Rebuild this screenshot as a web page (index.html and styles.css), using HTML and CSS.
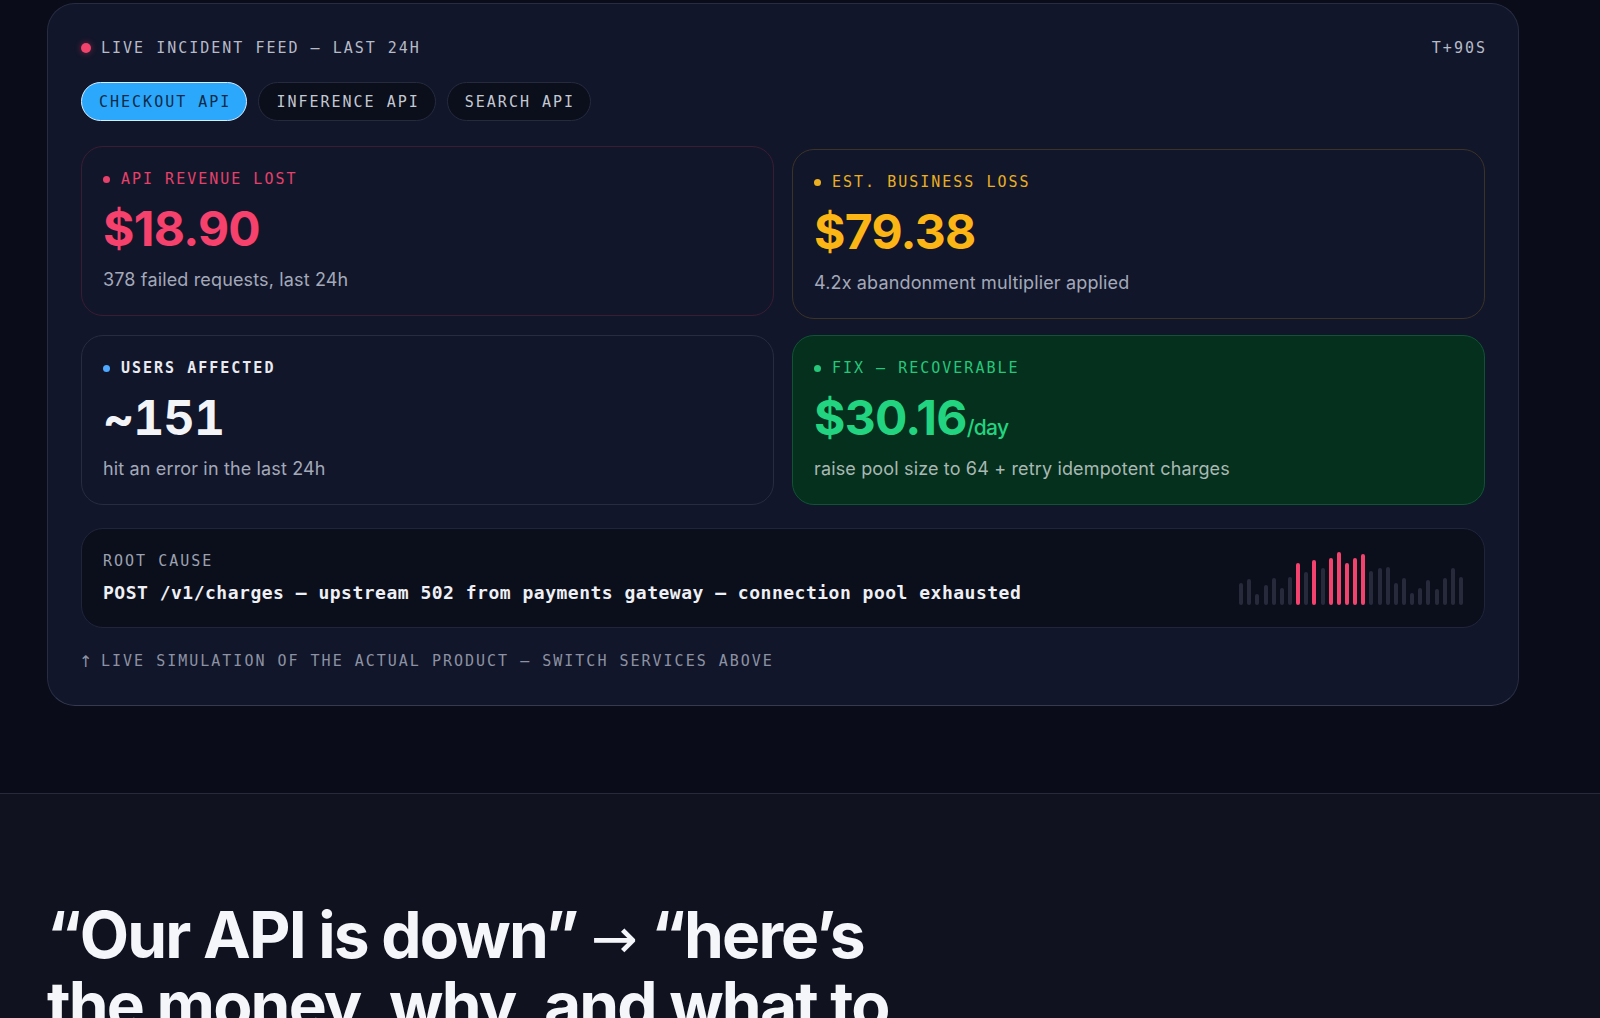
FILE: index.html
```html
<!DOCTYPE html>
<html lang="en">
<head>
<meta charset="utf-8">
<title>Live incident feed</title>
<link rel="stylesheet" href="styles.css">
</head>
<body>
<section class="hero">
  <div class="panel">
    <div class="feed-head">
      <div class="feed-title"><span class="live-dot"></span>LIVE INCIDENT FEED — LAST 24H</div>
      <div class="feed-time">T+90S</div>
    </div>
    <div class="pills">
      <button class="pill pill-active">CHECKOUT API</button>
      <button class="pill">INFERENCE API</button>
      <button class="pill">SEARCH API</button>
    </div>
    <div class="cards">
      <div class="card card-red card-lift">
        <div class="card-label"><span class="dot"></span>API REVENUE LOST</div>
        <div class="card-value">$18.90</div>
        <div class="card-sub">378 failed requests, last 24h</div>
      </div>
      <div class="card card-amber">
        <div class="card-label"><span class="dot"></span>EST. BUSINESS LOSS</div>
        <div class="card-value">$79.38</div>
        <div class="card-sub">4.2x abandonment multiplier applied</div>
      </div>
      <div class="card card-blue">
        <div class="card-label"><span class="dot"></span>USERS AFFECTED</div>
        <div class="card-value">~151</div>
        <div class="card-sub">hit an error in the last 24h</div>
      </div>
      <div class="card card-green">
        <div class="card-label"><span class="dot"></span>FIX — RECOVERABLE</div>
        <div class="card-value">$30.16<span class="per">/day</span></div>
        <div class="card-sub">raise pool size to 64 + retry idempotent charges</div>
      </div>
    </div>
    <div class="cause">
      <div class="cause-text">
        <div class="cause-label">ROOT CAUSE</div>
        <div class="cause-desc">POST /v1/charges — upstream 502 from payments gateway — connection pool exhausted</div>
      </div>
      <div class="bars">
        <span class="bar" style="height:22px"></span>
        <span class="bar" style="height:26px"></span>
        <span class="bar" style="height:11px"></span>
        <span class="bar" style="height:20px"></span>
        <span class="bar" style="height:27px"></span>
        <span class="bar" style="height:17px"></span>
        <span class="bar" style="height:28px"></span>
        <span class="bar bar-hot" style="height:42px"></span>
        <span class="bar" style="height:33px"></span>
        <span class="bar bar-hot" style="height:45px"></span>
        <span class="bar" style="height:37px"></span>
        <span class="bar bar-hot" style="height:47px"></span>
        <span class="bar bar-hot" style="height:53px"></span>
        <span class="bar bar-hot" style="height:42px"></span>
        <span class="bar bar-hot" style="height:47px"></span>
        <span class="bar bar-hot" style="height:51px"></span>
        <span class="bar" style="height:34px"></span>
        <span class="bar" style="height:37px"></span>
        <span class="bar" style="height:38px"></span>
        <span class="bar" style="height:22px"></span>
        <span class="bar" style="height:27px"></span>
        <span class="bar" style="height:12px"></span>
        <span class="bar" style="height:17px"></span>
        <span class="bar" style="height:25px"></span>
        <span class="bar" style="height:16px"></span>
        <span class="bar" style="height:27px"></span>
        <span class="bar" style="height:37px"></span>
        <span class="bar" style="height:28px"></span>
      </div>
    </div>
    <div class="note"><span class="note-arrow">↑</span>LIVE SIMULATION OF THE ACTUAL PRODUCT — SWITCH SERVICES ABOVE</div>
  </div>
</section>
<section class="pitch">
  <h2 class="headline">“Our API is down” <span class="arrow">→</span> “here’s<br>the money, why, and what to</h2>
</section>
</body>
</html>
```
FILE: styles.css
```css
* { box-sizing: border-box; }

html, body {
  margin: 0;
  padding: 0;
}

body {
  background: #0a0c19;
  height: 1018px;
  overflow: hidden;
  font-family: "Inter", "Noto Sans", sans-serif;
  color: #eef0f5;
}

.hero {
  padding: 3px 0 87px 47px;
  border-bottom: 1px solid #262a3b;
}

.panel {
  width: 1472px;
  background: #12162a;
  border: 1px solid #272c41;
  border-bottom-color: #353a50;
  border-radius: 28px;
  padding: 33px 33px 34px;
}

.feed-head {
  display: flex;
  justify-content: space-between;
  align-items: center;
  height: 20px;
  margin-top: 1px;
  font-family: "DejaVu Sans Mono", "Liberation Mono", monospace;
  font-size: 15px;
  letter-spacing: 2px;
  color: #b6bbc8;
}

.feed-title {
  display: flex;
  align-items: center;
}

.live-dot {
  width: 10px;
  height: 10px;
  border-radius: 50%;
  background: #f2436d;
  margin-right: 10px;
  box-shadow: 0 0 6px rgba(242, 67, 109, 0.45);
}

.feed-time {
  margin-right: -2px;
}

.pills {
  display: flex;
  gap: 11px;
  margin-top: 24px;
}

.pill {
  height: 39px;
  padding: 0 15px 0 17px;
  border-radius: 20px;
  border: 1px solid #252a3d;
  background: #0b0e1b;
  color: #c3c8d3;
  font-family: "DejaVu Sans Mono", "Liberation Mono", monospace;
  font-size: 15px;
  letter-spacing: 2px;
  cursor: pointer;
}

.pill-active {
  background: #2ba8fb;
  border: 1.5px solid #d6ecff;
  color: #0e2a47;
}

.cards {
  display: grid;
  grid-template-columns: 1fr 1fr;
  gap: 16px 18px;
  margin-top: 28px;
}

.card {
  border: 1px solid #272c40;
  border-radius: 22px;
  background: #12162a;
  padding: 22px 21px 23px;
}

.card-lift {
  transform: translateY(-3px);
}

.card-label {
  display: flex;
  align-items: center;
  height: 20px;
  font-family: "DejaVu Sans Mono", "Liberation Mono", monospace;
  font-size: 15px;
  letter-spacing: 2px;
}

.dot {
  width: 7px;
  height: 7px;
  border-radius: 50%;
  margin-right: 11px;
  background: currentColor;
}

.card-value {
  margin-top: 16px;
  font-size: 48px;
  line-height: 48px;
  font-weight: 700;
  letter-spacing: -0.015em;
}

.per {
  font-size: 21px;
  line-height: 1;
  font-weight: 500;
  letter-spacing: -0.03em;
}

.card-sub {
  margin-top: 15px;
  font-size: 18px;
  line-height: 24px;
  color: #a3a9b9;
  letter-spacing: 0.15px;
}

.card-red { border-color: #3b1d33; }
.card-red .card-label { color: #e5416b; }
.card-red .card-value { color: #f7416d; }

.card-amber { border-color: #3b3326; }
.card-amber .card-label { color: #eab021; }
.card-amber .card-value { color: #fbb514; }

.card-blue .card-label { color: #e8eaf0; font-weight: 700; }
.card-blue .card-label .dot { background: #4ea8ff; }
.card-blue .card-value {
  color: #f3f4f8;
  font-variant-numeric: tabular-nums;
}

.card-green {
  background: #04301d;
  border-color: #0f5534;
}
.card-green .card-label { color: #27c77b; }
.card-green .card-value { color: #22d47f; }
.card-green .card-sub { color: #a9b8b3; }

.cause {
  display: flex;
  justify-content: space-between;
  align-items: flex-end;
  margin-top: 23px;
  height: 100px;
  border: 1px solid #20253a;
  border-radius: 22px;
  background: #0b0e1b;
  padding: 22px 21px 22px;
}

.cause-label {
  height: 20px;
  line-height: 20px;
  font-family: "DejaVu Sans Mono", "Liberation Mono", monospace;
  font-size: 15px;
  letter-spacing: 2px;
  color: #9ba1b0;
}

.cause-desc {
  margin-top: 9px;
  line-height: 25px;
  font-family: "DejaVu Sans Mono", "Liberation Mono", monospace;
  font-size: 18px;
  font-weight: 700;
  letter-spacing: 0.5px;
  color: #eef0f5;
}

.bars {
  display: flex;
  align-items: flex-end;
  gap: 4.15px;
}

.bar {
  display: block;
  width: 4px;
  border-radius: 2px;
  background: #262a3b;
}

.bar-hot {
  background: #f2426d;
}

.note {
  display: flex;
  align-items: center;
  margin-top: 23px;
  height: 20px;
  margin-left: -2px;
  font-family: "DejaVu Sans Mono", "Liberation Mono", monospace;
  font-size: 15px;
  letter-spacing: 2px;
  color: #8c92a3;
}

.note-arrow {
  font-family: "DejaVu Sans", sans-serif;
  font-size: 16px;
  width: 22px;
  letter-spacing: 0;
}

.pitch {
  background: #10131f;
  padding: 108px 0 0 47px;
  min-height: 300px;
}

.headline {
  margin: 0;
  font-family: "Inter", "Noto Sans", sans-serif;
  font-size: 64px;
  line-height: 66px;
  font-weight: 700;
  letter-spacing: -0.028em;
  color: #f5f6fa;
}

.arrow {
  font-family: "DejaVu Sans", sans-serif;
  font-weight: 400;
  font-size: 56px;
  letter-spacing: 0;
}
```
